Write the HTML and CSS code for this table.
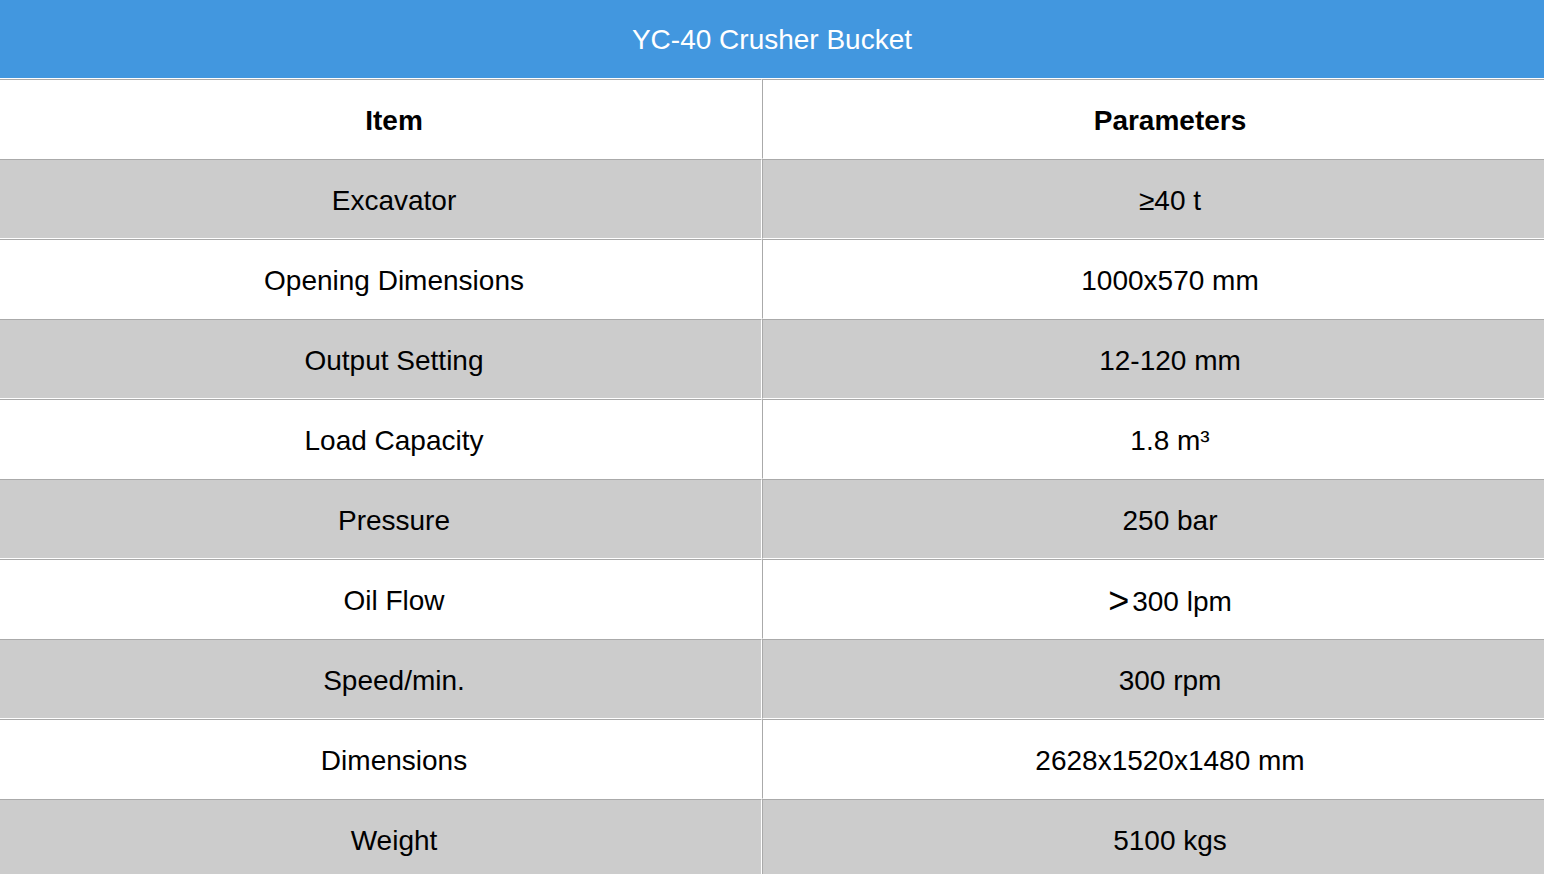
FILE: index.html
```html
<!DOCTYPE html>
<html>
<head>
<meta charset="utf-8">
<link rel="stylesheet" href="styles.css">
</head>
<body>
<div class="sheet">
  <div class="title">YC-40 Crusher Bucket</div>
  <div class="grid">
    <div class="cell left head">Item</div><div class="cell right head">Parameters</div>
    <div class="cell left alt">Excavator</div><div class="cell right alt">≥40 t</div>
    <div class="cell left">Opening Dimensions</div><div class="cell right">1000x570 mm</div>
    <div class="cell left alt">Output Setting</div><div class="cell right alt">12-120 mm</div>
    <div class="cell left">Load Capacity</div><div class="cell right">1.8 m³</div>
    <div class="cell left alt">Pressure</div><div class="cell right alt">250 bar</div>
    <div class="cell left">Oil Flow</div><div class="cell right"><span class="val"><span class="gt">&gt;</span>300 lpm</span></div>
    <div class="cell left alt">Speed/min.</div><div class="cell right alt">300 rpm</div>
    <div class="cell left">Dimensions</div><div class="cell right">2628x1520x1480 mm</div>
    <div class="cell left alt">Weight</div><div class="cell right alt">5100 kgs</div>
  </div>
</div>
</body>
</html>
```
FILE: styles.css
```css
html, body {
  margin: 0;
  padding: 0;
  background: #ffffff;
  overflow: hidden;
}
body {
  font-family: "Liberation Sans", Arial, "Noto Sans CJK SC", sans-serif;
  color: #000;
}
.sheet {
  width: 1544px;
  height: 874px;
  overflow: hidden;
}
.title {
  border-bottom: 1px solid #ffffff;
  background: #4297df;
  color: #ffffff;
  font-size: 28px;
  display: flex;
  align-items: center;
  justify-content: center;
  padding-top: 2px;
  box-sizing: border-box;
  height: 79px;
}
.grid {
  display: grid;
  grid-template-columns: 762px 782px;
}
.cell {
  border-top: 1px solid #aaaaaa;
  border-bottom: 1px solid #ffffff;
  background-clip: padding-box;
  display: flex;
  align-items: center;
  justify-content: center;
  font-size: 28px;
  box-sizing: border-box;
  height: 80px;
  padding-top: 3px;
}
.left {
  border-right: 1px solid #ffffff;
  padding-left: 27px;
}
.right {
  border-left: 1px solid #aaaaaa;
  padding-left: 33px;
}
.alt {
  background-color: #cccccc;
}
.head {
  font-weight: bold;
}
.val {
  line-height: 32px;
}
.gt {
  font-size: 36px;
  line-height: 1;
  vertical-align: -2px;
  margin-right: 3px;
}
```
